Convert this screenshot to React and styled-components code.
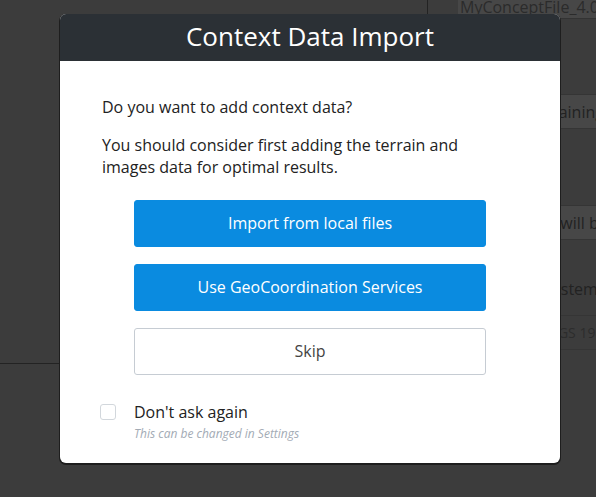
import React from 'react';
import styled, { createGlobalStyle } from 'styled-components';

const Global = createGlobalStyle`
  html, body {
    margin: 0;
    padding: 0;
    background: #3c3c3c;
    font-family: "Open Sans", "Liberation Sans", sans-serif;
  }
  #root {
    width: 596px;
    height: 497px;
    overflow: hidden;
    position: relative;
  }
`;

export default function App() {
  return (
    <>
      <Global />
      <Scene>
        <LeftPane />
        <RightPane>
          <FileTab>
            <span>MyConceptFile_4.0</span>
          </FileTab>
          <PaneRow $band $top={75} $indent={97}>Remaining</PaneRow>
          <PaneRow $band $top={76} $indent={93}>Data will be</PaneRow>
          <PaneRow $top={31} $indent={116}>System</PaneRow>
          <PaneRow $lined $small $top={9} $indent={117}>WGS 1984</PaneRow>
        </RightPane>
      </Scene>

      <Dialog>
        <Header>Context Data Import</Header>
        <Body>
          <Text>Do you want to add context data?</Text>
          <Text>
            You should consider first adding the terrain and
            <br />
            images data for optimal results.
          </Text>
          <Actions>
            <Button $primary>Import from local files</Button>
            <Button $primary>Use GeoCoordination Services</Button>
            <Button>Skip</Button>
          </Actions>
          <CheckRow>
            <Box />
            <div>
              <CheckLabel>Don't ask again</CheckLabel>
              <Hint>This can be changed in Settings</Hint>
            </div>
          </CheckRow>
        </Body>
      </Dialog>
    </>
  );
}

const Scene = styled.div`
  display: flex;
  width: 596px;
  height: 497px;
`;

const LeftPane = styled.div`
  width: 428px;
  height: 364px;
  border-right: 1px solid #232323;
  border-bottom: 1px solid #232323;
  box-sizing: border-box;
  flex-shrink: 0;
`;

const RightPane = styled.div`
  flex: 1;
  display: flex;
  flex-direction: column;
`;

const FileTab = styled.div`
  height: 19px;
  border-bottom: 1px solid #333;
  padding-left: 30px;
  box-sizing: border-box;
  overflow: hidden;

  span {
    display: block;
    height: 19px;
    background: #474747;
    color: #2b2b2b;
    font-size: 16px;
    line-height: 14px;
    padding-left: 2px;
    white-space: nowrap;
  }
`;

const PaneRow = styled.div`
  margin-top: ${p => p.$top}px;
  height: 33px;
  flex-shrink: 0;
  display: flex;
  align-items: center;
  padding-left: ${p => p.$indent}px;
  background: ${p => (p.$band ? '#474747' : 'transparent')};
  border-top: 1px solid ${p => (p.$band || p.$lined ? '#353535' : 'transparent')};
  border-bottom: 1px solid ${p => (p.$band || p.$lined ? '#353535' : 'transparent')};
  color: ${p => (p.$small ? '#2c2c2c' : '#222')};
  font-size: ${p => (p.$small ? 14 : 16)}px;
  white-space: nowrap;
  overflow: hidden;
`;

const Dialog = styled.div`
  position: absolute;
  left: 60px;
  top: 14px;
  width: 500px;
  height: 449px;
  background: #fff;
  border-radius: 6px;
  overflow: hidden;
  box-shadow: 0 1px 0 1px #1e1e1e;
  display: flex;
  flex-direction: column;
`;

const Header = styled.div`
  height: 47px;
  padding-bottom: 3px;
  box-sizing: border-box;
  background: #2b3035;
  color: #fff;
  font-size: 26px;
  display: flex;
  align-items: center;
  justify-content: center;
  flex-shrink: 0;
`;

const Body = styled.div`
  padding: 35px 42px 0 42px;
  color: #222;
`;

const Text = styled.p`
  margin: 0 0 16px 0;
  font-size: 16px;
  line-height: 22px;
`;

const Actions = styled.div`
  margin: 22px 0 0 32px;
  width: 352px;
  display: flex;
  flex-direction: column;
  gap: 17px;
`;

const Button = styled.div`
  height: 47px;
  box-sizing: border-box;
  border-radius: 3px;
  display: flex;
  align-items: center;
  justify-content: center;
  padding-bottom: 2px;
  font-size: 16px;
  background: ${p => (p.$primary ? '#0a8be0' : '#fff')};
  color: ${p => (p.$primary ? '#fff' : '#444')};
  border: 1px solid ${p => (p.$primary ? '#0a8be0' : '#c6ccd3')};
`;

const CheckRow = styled.div`
  margin-top: 26px;
  display: flex;
  align-items: flex-start;
  gap: 18px;
  margin-left: -2px;
`;

const Box = styled.div`
  width: 16px;
  height: 16px;
  box-sizing: border-box;
  border: 1px solid #d2d7dc;
  border-radius: 3px;
  margin-top: 3px;
`;

const CheckLabel = styled.div`
  font-size: 16px;
  line-height: 22px;
  color: #222;
`;

const Hint = styled.div`
  font-size: 12px;
  font-style: italic;
  color: #a3abb5;
  line-height: 18px;
  margin-top: 2px;
`;
